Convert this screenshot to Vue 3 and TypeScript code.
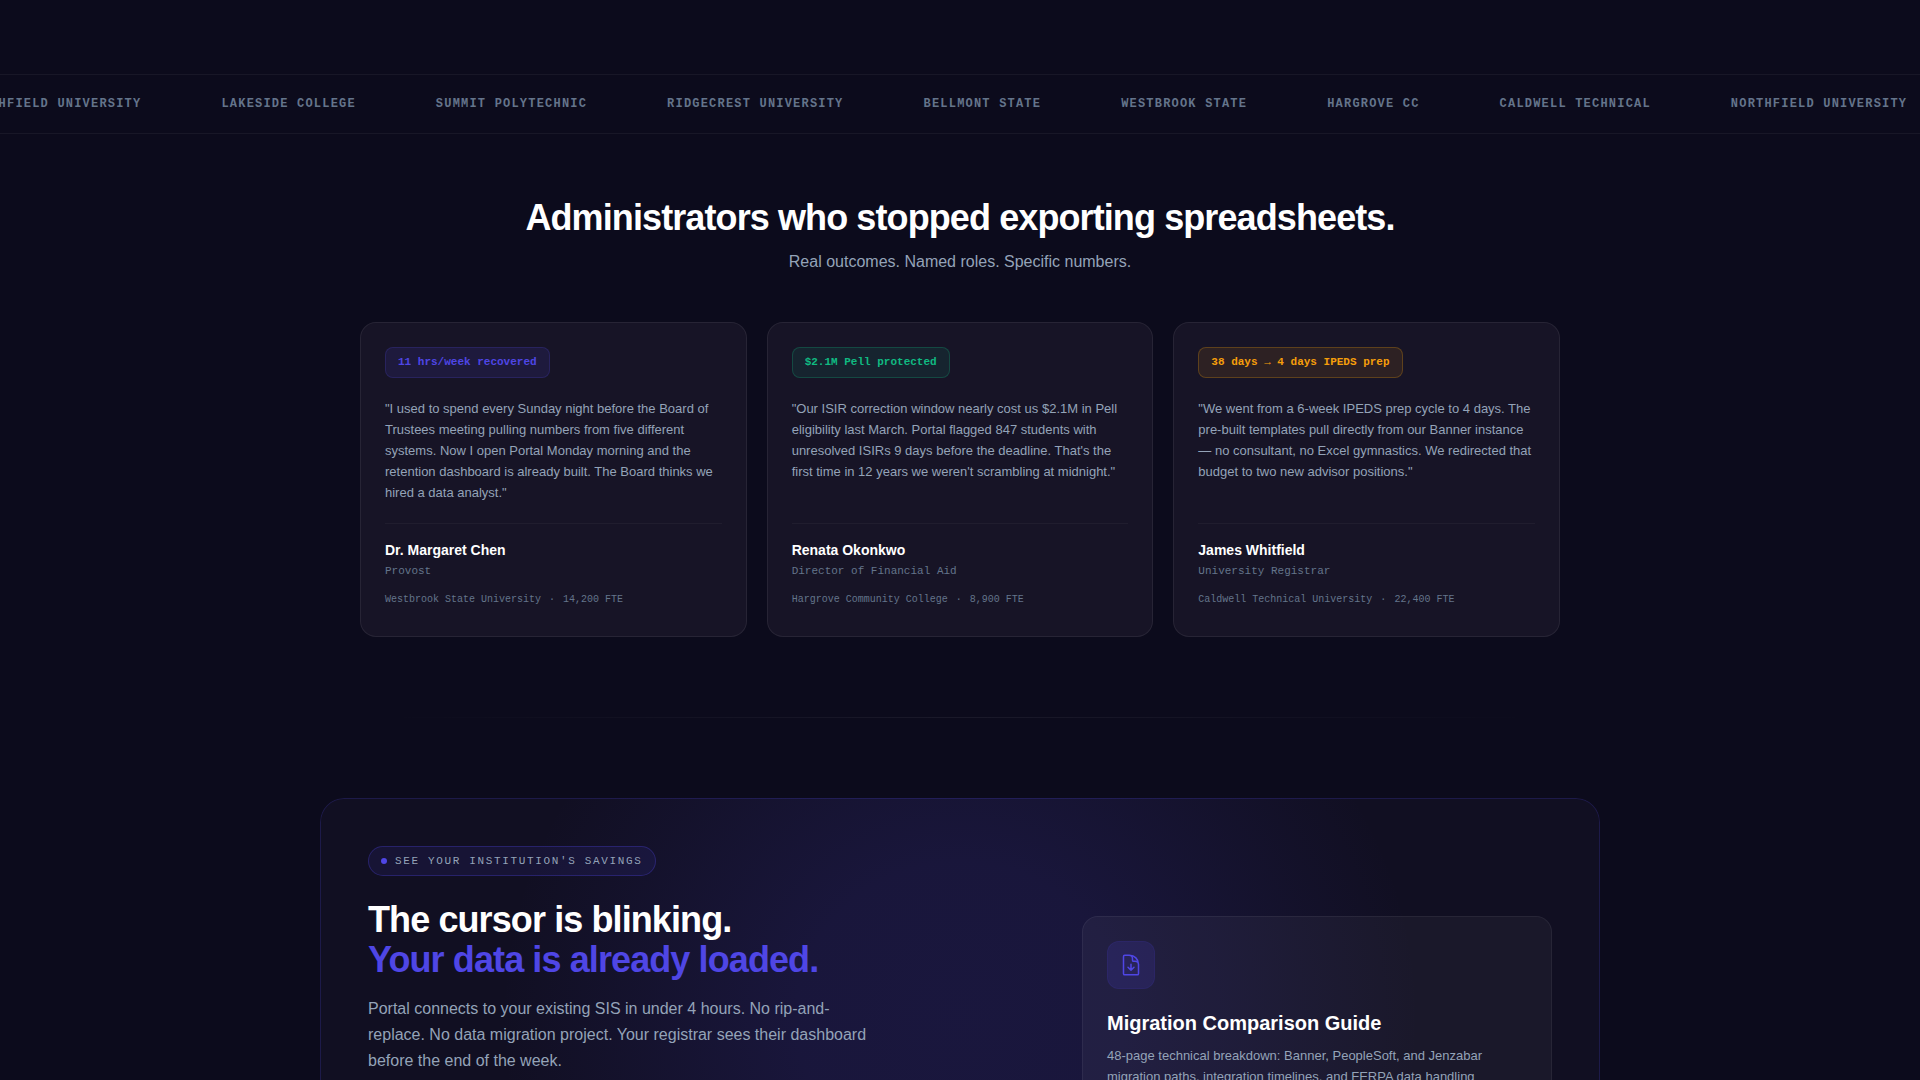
<script setup lang="ts">
interface Story {
  tone: 'indigo' | 'green' | 'amber'
  metric: string
  quote: string
  name: string
  role: string
  school: string
  size: string
}

const schools: string[] = [
  'Northfield University',
  'Lakeside College',
  'Summit Polytechnic',
  'Ridgecrest University',
  'Bellmont State',
  'Westbrook State',
  'Hargrove CC',
  'Caldwell Technical',
  'Northfield University',
]

const stories: Story[] = [
  {
    tone: 'indigo',
    metric: '11 hrs/week recovered',
    quote:
      'I used to spend every Sunday night before the Board of Trustees meeting pulling numbers from five different systems. Now I open Portal Monday morning and the retention dashboard is already built. The Board thinks we hired a data analyst.',
    name: 'Dr. Margaret Chen',
    role: 'Provost',
    school: 'Westbrook State University',
    size: '14,200 FTE',
  },
  {
    tone: 'green',
    metric: '$2.1M Pell protected',
    quote:
      "Our ISIR correction window nearly cost us $2.1M in Pell eligibility last March. Portal flagged 847 students with unresolved ISIRs 9 days before the deadline. That's the first time in 12 years we weren't scrambling at midnight.",
    name: 'Renata Okonkwo',
    role: 'Director of Financial Aid',
    school: 'Hargrove Community College',
    size: '8,900 FTE',
  },
  {
    tone: 'amber',
    metric: '38 days → 4 days IPEDS prep',
    quote:
      'We went from a 6-week IPEDS prep cycle to 4 days. The pre-built templates pull directly from our Banner instance — no consultant, no Excel gymnastics. We redirected that budget to two new advisor positions.',
    name: 'James Whitfield',
    role: 'University Registrar',
    school: 'Caldwell Technical University',
    size: '22,400 FTE',
  },
]
</script>

<template>
  <main class="page">
    <section class="marquee" aria-label="Institutions">
      <ul class="track">
        <li v-for="(school, i) in schools" :key="i">{{ school }}</li>
      </ul>
    </section>

    <section class="stories">
      <header class="intro">
        <h2>Administrators who stopped exporting spreadsheets.</h2>
        <p>Real outcomes. Named roles. Specific numbers.</p>
      </header>
      <div class="cards">
        <article v-for="s in stories" :key="s.name" class="card">
          <span class="metric" :class="s.tone">{{ s.metric }}</span>
          <blockquote>"{{ s.quote }}"</blockquote>
          <footer>
            <strong>{{ s.name }}</strong>
            <span class="role">{{ s.role }}</span>
            <span class="school">
              <span>{{ s.school }}</span><span class="sep">·</span><span>{{ s.size }}</span>
            </span>
          </footer>
        </article>
      </div>
    </section>

    <hr class="rule" />

    <section class="cta">
      <div class="cta-grid">
        <div class="pitch">
          <span class="eyebrow"><i class="dot"></i>See your institution's savings</span>
          <h2>The cursor is blinking.<br /><em>Your data is already loaded.</em></h2>
          <p>
            Portal connects to your existing SIS in under 4 hours. No rip-and-replace. No data
            migration project. Your registrar sees their dashboard before the end of the week.
          </p>
        </div>
        <aside class="guide">
          <div class="guide-icon">
            <svg
              viewBox="0 0 24 24"
              width="24"
              height="24"
              fill="none"
              stroke="currentColor"
              stroke-width="1.5"
              stroke-linecap="round"
              stroke-linejoin="round"
              aria-hidden="true"
            >
              <path
                d="M19.5 14.25v-2.625a3.375 3.375 0 0 0-3.375-3.375h-1.5A1.125 1.125 0 0 1 13.5 7.125v-1.5a3.375 3.375 0 0 0-3.375-3.375H8.25m.75 12 3 3m0 0 3-3m-3 3v-6m-1.5-9H5.625c-.621 0-1.125.504-1.125 1.125v17.25c0 .621.504 1.125 1.125 1.125h12.75c.621 0 1.125-.504 1.125-1.125V11.25a9 9 0 0 0-9-9Z"
              />
            </svg>
          </div>
          <h3>Migration Comparison Guide</h3>
          <p>
            48-page technical breakdown: Banner, PeopleSoft, and Jenzabar migration paths,
            integration timelines, and FERPA data handling
          </p>
        </aside>
      </div>
    </section>
  </main>
</template>

<style>
body {
  margin: 0;
  background: #0c0b1c;
}
</style>

<style scoped>
.page {
  box-sizing: border-box;
  height: 100vh;
  overflow: hidden;
  padding-top: 74px;
  background: #0c0b1c;
  color: #fff;
  font-family: 'Liberation Sans', Arial, sans-serif;
}
h2,
h3,
p,
ul,
blockquote {
  margin: 0;
  padding: 0;
}
.marquee {
  overflow: hidden;
  padding: 20px 0;
  border: solid rgba(255, 255, 255, 0.05);
  border-width: 1px 0;
}
.track {
  display: flex;
  gap: 80px;
  width: max-content;
  margin-left: -35px;
  list-style: none;
}
.track li {
  color: #64748b;
  font: bold 12px/18px 'Liberation Mono', 'Courier New', monospace;
  letter-spacing: 0.1em;
  text-transform: uppercase;
  white-space: nowrap;
}
.stories {
  max-width: 1200px;
  margin: 0 auto;
  padding: 64px 24px 80px;
}
.intro {
  margin-bottom: 48px;
  text-align: center;
}
h2 {
  font-size: 36px;
  line-height: 40px;
  letter-spacing: -0.025em;
}
.intro p {
  margin-top: 12px;
  color: #94a3b8;
  font-size: 16px;
  line-height: 24px;
}
.cards {
  display: grid;
  grid-template-columns: repeat(3, 1fr);
  gap: 20px;
}
.card {
  display: flex;
  flex-direction: column;
  align-items: flex-start;
  padding: 24px;
  border: 1px solid rgba(255, 255, 255, 0.07);
  border-radius: 16px;
  background: #171426;
}
.metric {
  padding: 6px 12px;
  border: 1px solid;
  border-radius: 8px;
  font: bold 11px/17px 'Liberation Mono', 'Courier New', monospace;
}
.indigo {
  border-color: rgba(79, 70, 229, 0.2);
  background: rgba(79, 70, 229, 0.12);
  color: #4f46e5;
}
.green {
  border-color: rgba(16, 185, 129, 0.25);
  background: rgba(16, 185, 129, 0.1);
  color: #10b981;
}
.amber {
  border-color: rgba(245, 158, 11, 0.25);
  background: rgba(245, 158, 11, 0.1);
  color: #f59e0b;
}
blockquote {
  flex: 1;
  margin: 20px 0;
  color: #94a3b8;
  font-size: 13px;
  line-height: 21px;
}
.card footer {
  display: flex;
  flex-direction: column;
  align-self: stretch;
  padding-top: 16px;
  border-top: 1px solid rgba(255, 255, 255, 0.04);
}
.card strong {
  font-size: 14px;
  line-height: 21px;
}
.role {
  margin-top: 2px;
  color: #64748b;
  font: 11px/17px 'Liberation Mono', 'Courier New', monospace;
}
.school {
  display: flex;
  gap: 8px;
  margin-top: 8px;
  color: #64748b;
  font: 10px/24px 'Liberation Mono', 'Courier New', monospace;
}
.rule {
  width: 60%;
  height: 1px;
  margin: 0 auto 80px;
  border: 0;
  background: linear-gradient(90deg, transparent, rgba(255, 255, 255, 0.06), transparent);
}
.cta {
  box-sizing: border-box;
  max-width: 1280px;
  margin: 0 auto;
  padding: 48px;
  border-radius: 24px;
  background:
    radial-gradient(
      ellipse 460px 440px at 50% 220px,
      rgba(79, 70, 229, 0.14),
      rgba(79, 70, 229, 0.13) 35%,
      rgba(79, 70, 229, 0.07) 65%,
      transparent
    ),
    #110f22;
  box-shadow: inset 0 0 0 1px rgba(79, 70, 229, 0.2);
}
.cta-grid {
  display: grid;
  grid-template-columns: 7fr 5fr;
  align-items: center;
  gap: 56px;
  min-height: 440px;
}
.pitch {
  align-self: start;
}
.eyebrow {
  display: inline-flex;
  align-items: center;
  gap: 8px;
  padding: 6px 12px;
  border: 1px solid rgba(79, 70, 229, 0.3);
  border-radius: 16px;
  background: rgba(79, 70, 229, 0.1);
  color: #94a3b8;
  font: 11px/16px 'Liberation Mono', 'Courier New', monospace;
  letter-spacing: 0.15em;
  text-transform: uppercase;
}
.dot {
  width: 6px;
  height: 6px;
  border-radius: 50%;
  background: #4f46e5;
}
.pitch h2 {
  margin-top: 24px;
}
.pitch em {
  color: #4f46e5;
  font-style: normal;
}
.pitch p {
  max-width: 512px;
  margin-top: 16px;
  color: #94a3b8;
  font-size: 16px;
  line-height: 26px;
}
.guide {
  box-sizing: border-box;
  min-height: 300px;
  padding: 24px;
  border: 1px solid rgba(255, 255, 255, 0.06);
  border-radius: 16px;
  background: rgba(255, 255, 255, 0.04);
}
.guide-icon {
  display: grid;
  place-items: center;
  box-sizing: border-box;
  width: 48px;
  height: 48px;
  border: 1px solid rgba(79, 70, 229, 0.1);
  border-radius: 12px;
  background: rgba(79, 70, 229, 0.15);
  color: #4f46e5;
}
h3 {
  margin-top: 20px;
  font-size: 20px;
  line-height: 28px;
}
.guide p {
  margin-top: 8px;
  color: #94a3b8;
  font-size: 13px;
  line-height: 21px;
}
</style>
